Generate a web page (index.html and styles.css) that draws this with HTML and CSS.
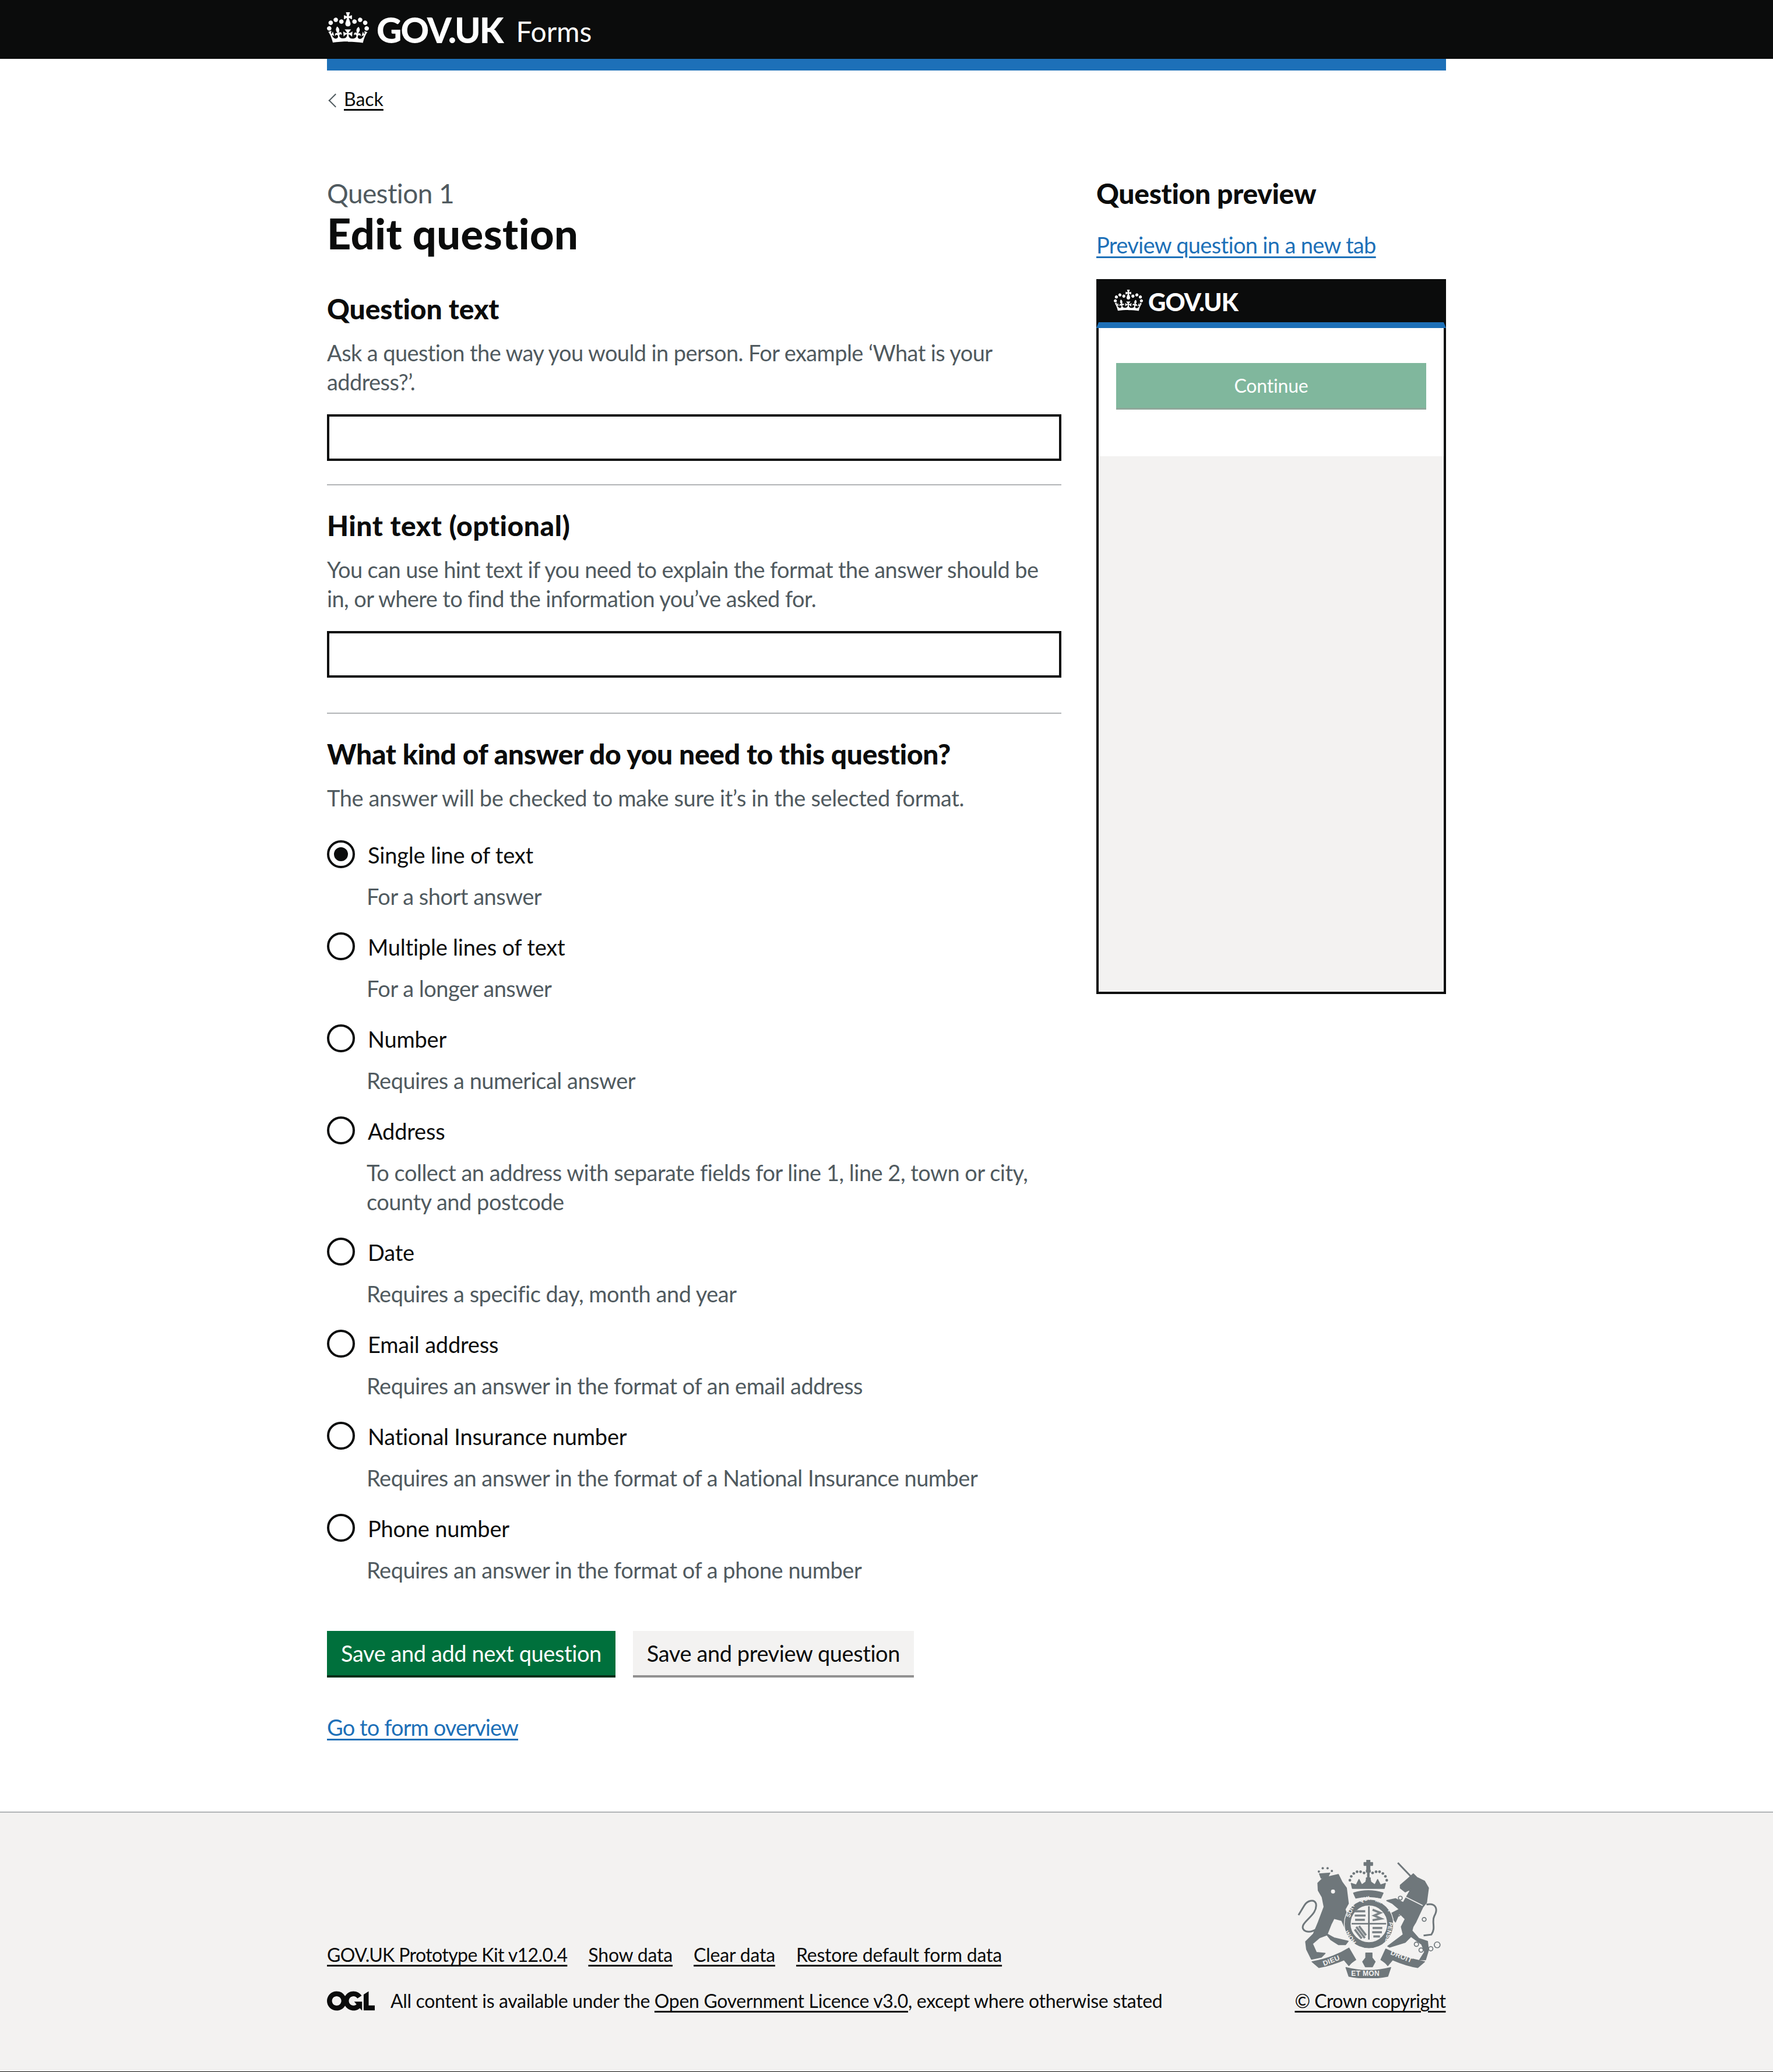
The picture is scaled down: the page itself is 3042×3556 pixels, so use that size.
FILE: index.html
```html
<!DOCTYPE html>
<html lang="en">
<head>
<meta charset="utf-8">
<title>Edit question - GOV.UK Forms</title>
<link rel="stylesheet" href="styles.css">
</head>
<body>
<header class="site-header">
  <div class="width-container header-inner">
    <a class="logo" href="#">
      <svg class="crown" viewBox="0 0 132 97" aria-hidden="true"><use href="#crown-path"/></svg>
      <span class="logo-text">GOV.UK</span>
    </a>
    <a class="service-name" href="#">Forms</a>
  </div>
</header>
<svg class="sprites" aria-hidden="true"><defs>
  <path id="crown-path" fill="currentColor" fill-rule="evenodd" d="M25 30.2c3.5 1.5 7.7-.2 9.1-3.7 1.5-3.6-.2-7.8-3.9-9.2-3.6-1.4-7.6.3-9.1 3.9-1.4 3.5.3 7.5 3.9 9zM9 39.5c3.6 1.5 7.8-.2 9.2-3.7 1.5-3.6-.2-7.8-3.9-9.1-3.6-1.5-7.6.2-9.1 3.8-1.4 3.5.3 7.5 3.8 9zM4.4 57.2c3.5 1.5 7.7-.2 9.1-3.8 1.5-3.6-.2-7.7-3.9-9.1-3.5-1.5-7.6.3-9.1 3.8-1.4 3.5.3 7.6 3.9 9.1zm38.3-21.4c3.5 1.5 7.7-.2 9.1-3.8 1.5-3.6-.2-7.7-3.9-9.1-3.6-1.5-7.6.3-9.1 3.8-1.3 3.6.4 7.7 3.9 9.1zm64.4-5.6c-3.6 1.5-7.8-.2-9.1-3.7-1.5-3.6.2-7.8 3.8-9.2 3.6-1.4 7.7.3 9.2 3.9 1.3 3.5-.4 7.5-3.9 9zm15.9 9.3c-3.6 1.5-7.7-.2-9.1-3.7-1.5-3.6.2-7.8 3.7-9.1 3.6-1.5 7.7.2 9.2 3.8 1.5 3.5-.3 7.5-3.8 9zm4.7 17.7c-3.6 1.5-7.8-.2-9.2-3.8-1.5-3.6.2-7.7 3.9-9.1 3.6-1.5 7.7.3 9.2 3.8 1.3 3.5-.4 7.6-3.9 9.1zM89.3 35.8c-3.6 1.5-7.8-.2-9.2-3.8-1.4-3.6.2-7.7 3.9-9.1 3.6-1.5 7.7.3 9.2 3.8 1.4 3.6-.3 7.7-3.9 9.1zM69.7 17.7l8.9 4.7V9.3l-8.9 2.8c-.2-.3-.5-.6-.9-.9L72.4 0H59.6l3.5 11.2c-.3.3-.6.5-.9.9l-8.8-2.8v13.1l8.8-4.7c.3.3.6.7.9.9l-5 15.4v.1c-.2.8-.4 1.6-.4 2.4 0 4.1 3.1 7.5 7 8.1h.2c.3 0 .7.1 1 .1.4 0 .7 0 1-.1h.2c4-.6 7.1-4.1 7.1-8.1 0-.8-.1-1.7-.4-2.4V34l-5.1-15.4c.4-.2.7-.6 1-.9zM66 92.8c16.9 0 32.8 1.1 47.1 3.2 4-16.9 8.9-26.7 14-33.5l-9.6-3.4c1 4.9 1.1 7.2 0 10.2-1.5-1.4-3-4.3-4.2-8.7L108.6 76c2.8-2 5-3.2 7.5-3.3-4.4 9.4-10 11.9-13.6 11.2-4.3-.8-6.3-4.6-5.6-7.9 1-4.7 5.7-5.9 8-.5 4.3-8.7-3-11.4-7.6-8.8 7.1-7.2 7.9-13.5 2.1-21.1-8 6.1-8.1 12.3-4.5 20.8-4.7-5.4-12.1-2.5-9.5 6.2 3.4-5.2 7.9-2 7.2 3.1-.6 4.3-6.4 7.8-13.5 7.2-10.3-.9-10.9-8-11.2-13 2.5-.5 7.1 1.8 11 7.3L80.2 60c-4.1 4.4-8 5.3-12.3 5.4 1.4-4.4 8-11.6 8-11.6H55.5s6.4 7.2 7.9 11.6c-4.2-.1-8-1-12.3-5.4l1.4 16.4c3.9-5.5 8.5-7.7 10.9-7.3-.3 5-.7 12.1-11 13-7.2.6-12.9-2.9-13.5-7.2-.7-5 3.8-8.3 7.1-3.1 2.7-8.7-4.6-11.6-9.4-6.2 3.7-8.5 3.6-14.7-4.6-20.8-5.8 7.6-5 13.9 2.2 21.1-4.7-2.6-11.9.1-7.7 8.8 2.3-5.5 7.1-4.2 8.1.5.7 3.3-1.3 7.1-5.7 7.9-3.5.7-9-1.8-13.5-11.2 2.5.1 4.7 1.3 7.5 3.3l-4.7-15.4c-1.2 4.4-2.7 7.2-4.3 8.7-1.1-3-.9-5.3 0-10.2l-9.5 3.4c5 6.9 9.9 16.7 14 33.5 14.8-2.1 30.8-3.2 47.7-3.2z"/>
</defs></svg>
<div class="width-container">
  <div class="phase-bar"></div>
  <a class="back-link" href="#">Back</a>
  <main class="layout">
    <form class="form-col">
      <span class="caption">Question 1</span>
      <h1 class="page-title">Edit question</h1>

      <h2 class="field-title field-title-first">Question text</h2>
      <p class="hint">Ask a question the way you would in person. For example ‘What is your address?’.</p>
      <input class="text-input" type="text" aria-label="Question text">
      <hr class="divider">

      <h2 class="field-title field-title-next field-title-wide">Hint text (optional)</h2>
      <p class="hint">You can use hint text if you need to explain the format the answer should be in, or where to find the information you’ve asked for.</p>
      <input class="text-input" type="text" aria-label="Hint text">
      <hr class="divider divider-wide">

      <h2 class="field-title field-title-next">What kind of answer do you need to this question?</h2>
      <p class="hint hint-loose">The answer will be checked to make sure it’s in the selected format.</p>

      <div class="radios">
        <div class="radio-item"><span class="radio radio-checked"></span><span class="radio-label">Single line of text</span><span class="radio-hint">For a short answer</span></div>
        <div class="radio-item"><span class="radio"></span><span class="radio-label">Multiple lines of text</span><span class="radio-hint">For a longer answer</span></div>
        <div class="radio-item"><span class="radio"></span><span class="radio-label">Number</span><span class="radio-hint">Requires a numerical answer</span></div>
        <div class="radio-item"><span class="radio"></span><span class="radio-label">Address</span><span class="radio-hint">To collect an address with separate fields for line 1, line 2, town or city, county and postcode</span></div>
        <div class="radio-item"><span class="radio"></span><span class="radio-label">Date</span><span class="radio-hint">Requires a specific day, month and year</span></div>
        <div class="radio-item"><span class="radio"></span><span class="radio-label">Email address</span><span class="radio-hint">Requires an answer in the format of an email address</span></div>
        <div class="radio-item"><span class="radio"></span><span class="radio-label">National Insurance number</span><span class="radio-hint">Requires an answer in the format of a National Insurance number</span></div>
        <div class="radio-item"><span class="radio"></span><span class="radio-label">Phone number</span><span class="radio-hint">Requires an answer in the format of a phone number</span></div>
      </div>

      <div class="button-group">
        <button class="button button-primary" type="button">Save and add next question</button>
        <button class="button button-secondary" type="button">Save and preview question</button>
      </div>
      <a class="link overview-link" href="#">Go to form overview</a>
    </form>

    <aside class="preview-col">
      <h2 class="preview-title">Question preview</h2>
      <a class="link preview-link" href="#">Preview question in a new tab</a>
      <div class="preview-box">
        <div class="preview-header">
          <svg class="preview-crown" viewBox="0 0 132 97" aria-hidden="true"><use href="#crown-path"/></svg>
          <span class="preview-logo">GOV.UK</span>
        </div>
        <div class="preview-bar"></div>
        <div class="preview-body"><div class="preview-button">Continue</div></div>
        <div class="preview-rest"></div>
      </div>
    </aside>
  </main>
</div>

<footer class="site-footer">
  <div class="width-container footer-inner">
    <div class="footer-meta">
      <ul class="footer-links">
        <li class="footer-link-tight"><a href="#">GOV.UK Prototype Kit v12.0.4</a></li>
        <li><a href="#">Show data</a></li>
        <li><a href="#">Clear data</a></li>
        <li><a href="#">Restore default form data</a></li>
      </ul>
      <div class="licence">
        <svg class="ogl" viewBox="0 0 483.2 195.7" aria-hidden="true"><path fill="currentColor" d="M421.5 142.8V.1l-50.7 32.3v161.1h112.4v-50.7zm-122.3-9.6A47.12 47.12 0 0 1 221 97.8c0-26 21.1-47.1 47.1-47.1 16.7 0 31.4 8.7 39.7 21.8l42.7-27.2A97.63 97.63 0 0 0 268.1 0c-36.5 0-68.3 20.1-85.1 49.7A98 98 0 0 0 97.8 0C43.9 0 0 43.9 0 97.8s43.9 97.8 97.8 97.8c36.5 0 68.3-20.1 85.1-49.7a97.76 97.76 0 0 0 149.6 25.4l19.4 22.2h3v-87.8h-80l24.3 27.5zM97.8 145c-26 0-47.1-21.1-47.1-47.1s21.1-47.1 47.1-47.1 47.2 21 47.2 47S123.8 145 97.8 145"/></svg>
        <span class="licence-text">All content is available under the <a href="#">Open Government Licence v3.0</a>, except where otherwise stated</span>
      </div>
    </div>
    <div class="footer-crest">
      <svg class="arms" viewBox="135 65 750 610" aria-hidden="true">
        <g class="arms-fill">
          <path d="M492 65h16v14h14v14h-14v22h-16V93h-14V79h14z"/>
          <path d="M490 118h20v10h-6v30h6v12h-20v-12h6v-30h-6z"/>
          <path d="M418 212l-6-26 26 8 14-28 14 28 22-16v-6h24v6l22 16 14-28 14 28 26-8-6 26z"/>
          <path d="M424 236q76-24 152 0l-12 26q-64-16-128 0z"/>
          <path d="M240 185l25-25 80-20 20 40 22 30 10 80-17 30 24 70 4 34-30-12-15-35-40-10-15 30-20 50 35 20 73 17-14 18h-35l-40-25-20-25-40 15-35 30 20 45 45 5-20 20-50 10-25-50-5-40 40-40 25-60 30-80-10-50-20-35z"/>
          <path d="M665 195l35-30 32-28 18 18 40 20 20 35-10 75-20 25-35 75-15 25-5 20 35 40 45 15 5 45-15 50h-30l25-40-15-40-55-40-30 30-80 25-10-5 40-30 40-30-10-40 20-40-30-30-20 45-30-40 50-25-35-30-30-15 45-10 40 20 20-35 20-35-30 15-25-20z"/>
          <path d="M210 590q110-20 190-70l35 60q-25 15-35 30l-25-30q-70 30-130 40z"/>
          <path d="M790 590q-110-20-200-65l-25 55q25 15 35 30l25-30q70 30 130 40z"/>
          <path d="M385 620q115 30 230 0l-15 45q-100 20-200 0z"/>
          <path d="M487 545h32v25l16 20-14 26h-36l-14-26 16-20z"/>
        </g>
        <circle class="arms-ring" cx="503" cy="395" r="127"/>
        <g class="arms-line">
          <path d="M236 420c-46 30-86 10-71-20 15-30 75-60 65-110-10-25-45-15-60 10l-30 50"/>
          <path d="M800 295c50-10 60 25 40 60-15 30 10 60-15 95l-40 5"/>
          <path d="M652 80l75 78"/>
        </g>
        <g class="arms-dots">
          <circle cx="405" cy="170" r="7"/><circle cx="412" cy="150" r="7"/><circle cx="425" cy="135" r="7"/><circle cx="442" cy="126" r="7"/><circle cx="460" cy="126" r="7"/><circle cx="478" cy="132" r="7"/>
          <circle cx="595" cy="170" r="7"/><circle cx="588" cy="150" r="7"/><circle cx="575" cy="135" r="7"/><circle cx="558" cy="126" r="7"/><circle cx="540" cy="126" r="7"/><circle cx="522" cy="132" r="7"/>
          <circle cx="245" cy="125" r="6"/><circle cx="265" cy="108" r="6"/><circle cx="290" cy="108" r="6"/><circle cx="312" cy="122" r="6"/>
          <path d="M245 135l60-5-10 22-40 10z"/>
        </g>
        <g class="arms-rings">
          <circle cx="748" cy="500" r="11"/><circle cx="772" cy="530" r="11"/><circle cx="822" cy="523" r="11"/><circle cx="855" cy="503" r="15"/><circle cx="665" cy="262" r="10"/><circle cx="788" cy="372" r="10"/><circle cx="655" cy="345" r="10"/>
        </g>
        <g class="arms-cut">
          <circle cx="503" cy="395" r="92"/>
          <circle cx="318" cy="228" r="8"/>
          <path d="M690 255l90 45"/>
        </g>
        <path class="arms-cross" d="M503 304v172M414 394h178"/>
        <g class="arms-quarter">
          <path d="M432 330h52M430 352h56M432 374h50"/>
          <path d="M522 322l40 16-32 14 36 16-44 8"/>
          <path d="M438 410l44 58M452 406l36 48M430 424l36 46"/>
          <path d="M522 416h50M520 438h50M526 460h34"/>
        </g>
        <text class="arms-text" transform="translate(404 364) rotate(-68)">SOIT</text>
        <text class="arms-text" transform="translate(455 283) rotate(-12)">QUI</text>
        <text class="arms-text" transform="translate(535 279) rotate(20)">MAL</text>
        <text class="arms-text" transform="translate(596 322) rotate(50)">Y</text>
        <text class="arms-text" transform="translate(608 384) rotate(102)">PENSE</text>
        <text class="arms-text" transform="translate(438 490) rotate(-125)">HONI</text>
        <text class="arms-text arms-text-big" x="412" y="662">ET MON</text>
        <text class="arms-text arms-text-big" transform="translate(272 612) rotate(-22)">DIEU</text>
        <text class="arms-text arms-text-big" transform="translate(612 552) rotate(22)">DROIT</text>
      </svg>
      <a class="copyright" href="#">© Crown copyright</a>
    </div>
  </div>
</footer>
</body>
</html>
```
FILE: styles.css
```css
* { box-sizing: border-box; }
html, body { margin: 0; padding: 0; }
body {
  font-family: "Lato", "Noto Sans", sans-serif;
  font-size: 38px;
  line-height: 50px;
  color: #0b0c0c;
  background: #fff;
  letter-spacing: -0.2px;
}
a { color: inherit; text-decoration: underline; text-decoration-thickness: 3px; text-underline-offset: 5px; }
.sprites { display: none; }
.width-container { width: 1920px; margin: 0 auto; }

.site-header { background: #0b0c0c; height: 101px; color: #fff; }
.header-inner { display: flex; align-items: center; height: 101px; }
.logo { display: flex; align-items: center; color: #fff; text-decoration: none; }
.crown { width: 72px; height: 53px; margin-right: 13px; display: block; margin-top: -6px; }
.logo-text { font-weight: 900; font-size: 60px; line-height: 60px; letter-spacing: -2px; }
.service-name { font-size: 48px; line-height: 60px; color: #fff; text-decoration: none; margin-left: 23px; margin-top: 6px; letter-spacing: 0; }

.phase-bar { height: 20px; background: #1d70b8; }
.back-link {
  display: flex; width: fit-content; margin-top: 29px;
  font-size: 32px; line-height: 40px; padding-left: 29px; position: relative; letter-spacing: 0;
}
.back-link::before {
  content: ""; position: absolute; left: 6px; top: 14px; width: 15px; height: 15px;
  border-left: 2px solid #505a5f; border-bottom: 2px solid #505a5f; transform: rotate(45deg);
}

.layout { display: grid; grid-template-columns: 1260px 600px; column-gap: 60px; padding-top: 112px; }
.form-col { display: block; min-width: 0; }
.caption { display: block; font-size: 46px; line-height: 60px; color: #505a5f; letter-spacing: -0.6px; }
.page-title { margin: 0 0 62px; font-size: 72px; line-height: 76px; font-weight: 900; letter-spacing: 0.5px; }
.field-title { margin: 0 0 20px; font-size: 48px; line-height: 60px; font-weight: 900; letter-spacing: -0.33px; }
.field-title-first { letter-spacing: -0.1px; }
.field-title-next { margin-top: 39px; }
.field-title-wide { letter-spacing: 0.55px; }
.hint { margin: 0; color: #505a5f; letter-spacing: -0.6px; }
.hint-loose { letter-spacing: -0.38px; }
.text-input {
  display: block; width: 100%; height: 80px; margin: 31px 0 40px; padding: 10px;
  border: 4px solid #0b0c0c; border-radius: 0; background: #fff; font: inherit;
}
.divider { margin: 0; border: 0; border-top: 2px solid #b1b4b6; }
.divider-wide { margin-top: 60px; }
.radios { margin-top: 48px; display: flex; flex-direction: column; gap: 37px; }
.radio-item { display: grid; grid-template-columns: 70px 1fr; row-gap: 21px; }
.radio { width: 48px; height: 48px; border: 4px solid #0b0c0c; border-radius: 50%; background: #fff; position: relative; }
.radio-checked::after {
  content: ""; position: absolute; left: 8px; top: 8px; width: 24px; height: 24px;
  border-radius: 50%; background: #0b0c0c;
}
.radio-label { color: #0b0c0c; }
.radio-hint { grid-column: 2; color: #505a5f; margin-left: -2px; letter-spacing: -0.5px; }

.button-group { display: flex; gap: 30px; margin-top: 80px; }
.button {
  height: 76px; margin: 0 0 4px; padding: 0 24px; border: 0; border-radius: 0;
  font: inherit; letter-spacing: -0.42px; cursor: pointer;
}
.button-primary { background: #00703c; color: #fff; box-shadow: 0 4px 0 #002d18; }
.button-secondary { background: #f3f2f1; color: #0b0c0c; box-shadow: 0 4px 0 #929191; }
.link { color: #1d70b8; }
.overview-link { display: block; width: fit-content; margin-top: 60px; letter-spacing: -0.9px; }

.preview-title { margin: 0 0 33px; font-size: 48px; line-height: 60px; font-weight: 900; letter-spacing: -0.3px; }
.preview-link { display: block; width: fit-content; letter-spacing: -0.67px; }
.preview-col { display: block; }
.preview-box {
  display: flex; flex-direction: column; margin-top: 34px; height: 1227px;
  border: 4px solid #0b0c0c;
}
.preview-header { display: flex; align-items: center; height: 70px; background: #0b0c0c; color: #fff; padding-left: 26px; }
.preview-crown { width: 50px; height: 37px; margin-right: 9px; margin-top: -5px; }
.preview-logo { font-weight: 900; font-size: 42px; line-height: 50px; letter-spacing: -1px; }
.preview-bar { height: 10px; margin: 0 -4px; background: #1d70b8; clip-path: polygon(4px 0, calc(100% - 4px) 0, 100% 100%, 0 100%); }
.preview-body { height: 220px; padding: 60px 30px 0; }
.preview-button {
  height: 77px; background: #80b79d; box-shadow: 0 3px 0 #8fa79b;
  color: #fff; font-size: 32px; line-height: 77px; text-align: center;
}
.preview-rest { flex: 1; background: #f3f2f1; }

.site-footer {
  margin-top: 120px; height: 447px; background: #f3f2f1;
  border-top: 2px solid #b1b4b6; border-bottom: 1px solid #0b0c0c;
  font-size: 32px; line-height: 40px;
}
.footer-inner { display: flex; justify-content: space-between; align-items: flex-start; }
.footer-meta { padding-top: 224px; }
.footer-links { display: flex; gap: 36px; margin: 0; padding: 0; list-style: none; }
.footer-link-tight { letter-spacing: -0.6px; }
.licence { display: flex; align-items: center; margin-top: 39px; gap: 27px; }
.licence-text { letter-spacing: -0.33px; }
.ogl { width: 82px; height: 34px; display: block; }
.footer-crest { display: flex; flex-direction: column; align-items: center; width: 260px; padding-top: 81px; }
.arms { width: 250px; height: 203px; display: block; }
.copyright { display: block; margin-top: 19px; white-space: nowrap; letter-spacing: -0.55px; }

.arms-fill { fill: #6f777b; stroke: #6f777b; stroke-width: 5; stroke-linejoin: round; }
.arms-ring { fill: #6f777b; stroke: #f3f2f1; stroke-width: 4; }
.arms-line { fill: none; stroke: #6f777b; stroke-width: 9; }
.arms-dots { fill: #6f777b; }
.arms-rings { fill: none; stroke: #6f777b; stroke-width: 5; }
.arms-cut { fill: #f3f2f1; stroke: #f3f2f1; stroke-width: 5; }
.arms-cross { fill: none; stroke: #6f777b; stroke-width: 8; }
.arms-quarter { fill: none; stroke: #7d8488; stroke-width: 11; }
.arms-text { fill: #f3f2f1; font-family: "Liberation Sans", sans-serif; font-size: 30px; font-weight: 700; letter-spacing: 1px; }
.arms-text-big { font-size: 36px; }
```
